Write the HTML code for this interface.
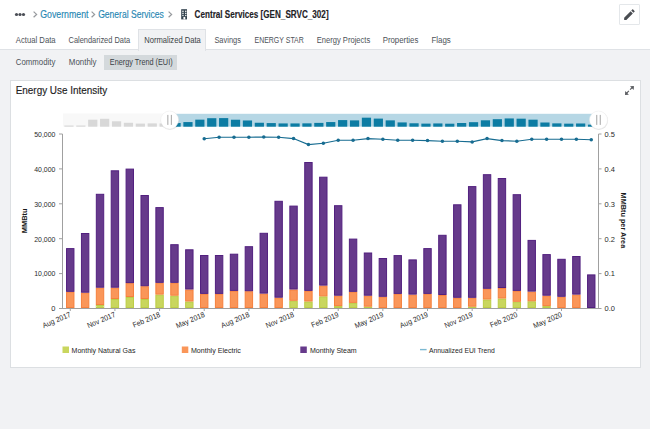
<!DOCTYPE html>
<html><head><meta charset="utf-8">
<style>
*{margin:0;padding:0;box-sizing:border-box}
html,body{width:650px;height:429px;overflow:hidden;background:#f1f2f4;font-family:"Liberation Sans",sans-serif}
#hdr{position:absolute;left:0;top:0;width:650px;height:49.5px;background:#fff;border-bottom:1px solid #dfe2e6}
.abs{position:absolute;white-space:nowrap}
svg text{font-family:"Liberation Sans",sans-serif}
.ax{font-size:7.5px;fill:#2a2a2a}
.axt{font-size:7.5px;font-weight:bold;fill:#1a1a1a}
.lg{font-size:7.8px;fill:#262626}
</style></head><body>
<div id="hdr"></div>
<div class="abs" style="left:138.2px;top:29px;width:67.5px;height:21.5px;background:#f1f2f4;border:1px solid #dfe2e6;border-bottom:none"></div>
<div class="abs" style="left:618.5px;top:4px;width:21.5px;height:20.5px;border:1px solid #e4e7ea;border-radius:1px;background:#fff"></div>
<div class="abs" style="left:104px;top:55.2px;width:73.2px;height:14.7px;background:#d4d9dc"></div>
<div class="abs" style="left:10px;top:80px;width:631px;height:288px;background:#fff;border:1px solid #dcdfe2"></div>
<svg class="abs" style="left:0;top:0" width="650" height="429">
<circle cx="16.5" cy="14.5" r="1.6" fill="#4a4d55"/><circle cx="20" cy="14.5" r="1.6" fill="#4a4d55"/><circle cx="23.5" cy="14.5" r="1.6" fill="#4a4d55"/>
<polyline points="33.6,11.6 36.6,14.4 33.6,17.2" fill="none" stroke="#96999d" stroke-width="1.25"/>
<polyline points="91.6,11.6 94.6,14.4 91.6,17.2" fill="none" stroke="#96999d" stroke-width="1.25"/>
<polyline points="168.6,11.6 171.6,14.4 168.6,17.2" fill="none" stroke="#96999d" stroke-width="1.25"/>
<rect x="181.2" y="9.2" width="5.8" height="10.2" fill="#34434f"/>
<g fill="#fff" opacity="0.85"><rect x="182.2" y="10.6" width="1.5" height="1.4"/><rect x="185.0" y="10.6" width="1.5" height="1.4"/><rect x="182.2" y="12.7" width="1.5" height="1.3"/><rect x="185.0" y="12.7" width="1.5" height="1.3"/><rect x="182.2" y="14.8" width="1.5" height="1.3"/><rect x="185.0" y="14.8" width="1.5" height="1.3"/></g><rect x="183.4" y="16.9" width="1.9" height="2.5" fill="#fff"/>
<path transform="translate(622.4,7.6) scale(0.585)" d="M3 17.25V21h3.75L17.81 9.94l-3.75-3.75L3 17.25zM20.71 7.04c.39-.39.39-1.02 0-1.41l-2.34-2.34c-.39-.39-1.02-.39-1.41 0l-1.83 1.83 3.75 3.75 1.83-1.83z" fill="#4a4d52"/>
<text x="40.2" y="17.6" font-size="10.4" fill="#2787b3" stroke="#2787b3" stroke-width="0.15" text-anchor="start" textLength="48.3" lengthAdjust="spacingAndGlyphs">Government</text>
<text x="98.2" y="17.6" font-size="10.4" fill="#2787b3" stroke="#2787b3" stroke-width="0.15" text-anchor="start" textLength="65.6" lengthAdjust="spacingAndGlyphs">General Services</text>
<text x="194.6" y="17.6" font-size="10.1" fill="#1e2226" stroke="#1e2226" stroke-width="0.15" text-anchor="start" font-weight="bold" textLength="134.0" lengthAdjust="spacingAndGlyphs">Central Services [GEN_SRVC_302]</text>
<text x="15.8" y="42.8" font-size="8.4" fill="#4d5259" stroke="#4d5259" stroke-width="0" text-anchor="start" textLength="39.8" lengthAdjust="spacingAndGlyphs">Actual Data</text>
<text x="68.5" y="42.8" font-size="8.4" fill="#4d5259" stroke="#4d5259" stroke-width="0" text-anchor="start" textLength="61.699999999999996" lengthAdjust="spacingAndGlyphs">Calendarized Data</text>
<text x="144.20000000000002" y="42.8" font-size="8.4" fill="#3a3f45" stroke="#3a3f45" stroke-width="0" text-anchor="start" textLength="56.599999999999994" lengthAdjust="spacingAndGlyphs">Normalized Data</text>
<text x="214.4" y="42.8" font-size="8.4" fill="#4d5259" stroke="#4d5259" stroke-width="0" text-anchor="start" textLength="26.5" lengthAdjust="spacingAndGlyphs">Savings</text>
<text x="254.5" y="42.8" font-size="8.4" fill="#4d5259" stroke="#4d5259" stroke-width="0" text-anchor="start" textLength="49.3" lengthAdjust="spacingAndGlyphs">ENERGY STAR</text>
<text x="316.8" y="42.8" font-size="8.4" fill="#4d5259" stroke="#4d5259" stroke-width="0" text-anchor="start" textLength="53.4" lengthAdjust="spacingAndGlyphs">Energy Projects</text>
<text x="382.7" y="42.8" font-size="8.4" fill="#4d5259" stroke="#4d5259" stroke-width="0" text-anchor="start" textLength="35.599999999999994" lengthAdjust="spacingAndGlyphs">Properties</text>
<text x="431.40000000000003" y="42.8" font-size="8.4" fill="#4d5259" stroke="#4d5259" stroke-width="0" text-anchor="start" textLength="19.400000000000002" lengthAdjust="spacingAndGlyphs">Flags</text>
<text x="15.8" y="65.2" font-size="8.4" fill="#4d5259" stroke="#4d5259" stroke-width="0" text-anchor="start" textLength="39.5" lengthAdjust="spacingAndGlyphs">Commodity</text>
<text x="68.8" y="65.2" font-size="8.4" fill="#4d5259" stroke="#4d5259" stroke-width="0" text-anchor="start" textLength="27.7" lengthAdjust="spacingAndGlyphs">Monthly</text>
<text x="109.8" y="65.2" font-size="8.4" fill="#3a3f45" stroke="#3a3f45" stroke-width="0" text-anchor="start" textLength="62.8" lengthAdjust="spacingAndGlyphs">Energy Trend (EUI)</text>
<text x="15.7" y="93.8" font-size="10.7" fill="#222" stroke="#222" stroke-width="0.15" text-anchor="start" textLength="91.5" lengthAdjust="spacingAndGlyphs">Energy Use Intensity</text>
<rect x="63.0" y="113.5" width="107.0" height="13" fill="#f8f8f8"/>
<rect x="170" y="113.8" width="428.5" height="12.8" fill="#b6d7e5"/>
<rect x="64.35" y="125.50" width="9.2" height="1.20" fill="#d8d8d8"/>
<rect x="76.25" y="125.50" width="9.2" height="1.20" fill="#d8d8d8"/>
<rect x="88.15" y="119.70" width="9.2" height="7.00" fill="#d8d8d8"/>
<rect x="100.05" y="118.80" width="9.2" height="7.90" fill="#d8d8d8"/>
<rect x="111.95" y="121.30" width="9.2" height="5.40" fill="#d8d8d8"/>
<rect x="123.85" y="122.80" width="9.2" height="3.90" fill="#d8d8d8"/>
<rect x="135.75" y="123.60" width="9.2" height="3.10" fill="#d8d8d8"/>
<rect x="147.65" y="123.40" width="9.2" height="3.30" fill="#d8d8d8"/>
<rect x="159.55" y="123.40" width="9.2" height="3.30" fill="#d8d8d8"/>
<rect x="171.45" y="123.00" width="9.2" height="3.70" fill="#0c7ca3"/>
<rect x="183.35" y="122.07" width="9.2" height="4.63" fill="#0c7ca3"/>
<rect x="195.25" y="119.65" width="9.2" height="7.05" fill="#0c7ca3"/>
<rect x="207.15" y="118.20" width="9.2" height="8.50" fill="#0c7ca3"/>
<rect x="219.05" y="118.10" width="9.2" height="8.60" fill="#0c7ca3"/>
<rect x="230.95" y="119.73" width="9.2" height="6.97" fill="#0c7ca3"/>
<rect x="242.85" y="120.47" width="9.2" height="6.23" fill="#0c7ca3"/>
<rect x="254.75" y="122.76" width="9.2" height="3.94" fill="#0c7ca3"/>
<rect x="266.65" y="123.08" width="9.2" height="3.62" fill="#0c7ca3"/>
<rect x="278.55" y="123.43" width="9.2" height="3.27" fill="#0c7ca3"/>
<rect x="290.45" y="123.43" width="9.2" height="3.27" fill="#0c7ca3"/>
<rect x="302.35" y="123.35" width="9.2" height="3.35" fill="#0c7ca3"/>
<rect x="314.25" y="122.89" width="9.2" height="3.81" fill="#0c7ca3"/>
<rect x="326.15" y="122.06" width="9.2" height="4.64" fill="#0c7ca3"/>
<rect x="338.05" y="120.09" width="9.2" height="6.61" fill="#0c7ca3"/>
<rect x="349.95" y="120.38" width="9.2" height="6.32" fill="#0c7ca3"/>
<rect x="361.85" y="117.69" width="9.2" height="9.01" fill="#0c7ca3"/>
<rect x="373.75" y="118.60" width="9.2" height="8.10" fill="#0c7ca3"/>
<rect x="385.65" y="120.36" width="9.2" height="6.34" fill="#0c7ca3"/>
<rect x="397.55" y="122.42" width="9.2" height="4.28" fill="#0c7ca3"/>
<rect x="409.45" y="123.28" width="9.2" height="3.42" fill="#0c7ca3"/>
<rect x="421.35" y="123.62" width="9.2" height="3.08" fill="#0c7ca3"/>
<rect x="433.25" y="123.44" width="9.2" height="3.26" fill="#0c7ca3"/>
<rect x="445.15" y="123.70" width="9.2" height="3.00" fill="#0c7ca3"/>
<rect x="457.05" y="123.00" width="9.2" height="3.70" fill="#0c7ca3"/>
<rect x="468.95" y="122.18" width="9.2" height="4.52" fill="#0c7ca3"/>
<rect x="480.85" y="120.30" width="9.2" height="6.40" fill="#0c7ca3"/>
<rect x="492.75" y="119.18" width="9.2" height="7.52" fill="#0c7ca3"/>
<rect x="504.65" y="118.44" width="9.2" height="8.26" fill="#0c7ca3"/>
<rect x="516.55" y="118.68" width="9.2" height="8.02" fill="#0c7ca3"/>
<rect x="528.45" y="119.68" width="9.2" height="7.02" fill="#0c7ca3"/>
<rect x="540.35" y="122.50" width="9.2" height="4.20" fill="#0c7ca3"/>
<rect x="552.25" y="123.37" width="9.2" height="3.33" fill="#0c7ca3"/>
<rect x="564.15" y="123.66" width="9.2" height="3.04" fill="#0c7ca3"/>
<rect x="576.05" y="123.49" width="9.2" height="3.21" fill="#0c7ca3"/>
<rect x="587.95" y="124.63" width="9.2" height="2.07" fill="#0c7ca3"/>
<circle cx="169.9" cy="120.6" r="9.3" fill="#000" opacity="0.10"/>
<circle cx="169.6" cy="120" r="9" fill="#fff" stroke="#ececec" stroke-width="0.5"/>
<line x1="167.85" y1="114.9" x2="167.85" y2="124.9" stroke="#a5a5a5" stroke-width="1"/>
<line x1="171.35" y1="114.9" x2="171.35" y2="124.9" stroke="#a5a5a5" stroke-width="1"/>
<circle cx="598.8" cy="120.6" r="9.3" fill="#000" opacity="0.10"/>
<circle cx="598.5" cy="120" r="9" fill="#fff" stroke="#ececec" stroke-width="0.5"/>
<line x1="596.75" y1="114.9" x2="596.75" y2="124.9" stroke="#a5a5a5" stroke-width="1"/>
<line x1="600.25" y1="114.9" x2="600.25" y2="124.9" stroke="#a5a5a5" stroke-width="1"/>
<line x1="62.5" y1="134" x2="62.5" y2="308.0" stroke="#a0a0a0" stroke-width="1"/>
<line x1="598.5" y1="134" x2="598.5" y2="308.0" stroke="#a0a0a0" stroke-width="1"/>
<line x1="59" y1="308.5" x2="599.0" y2="308.5" stroke="#a0a0a0" stroke-width="1"/>
<line x1="59" y1="308.5" x2="62.5" y2="308.5" stroke="#a0a0a0" stroke-width="1"/>
<text x="55.4" y="311.3" text-anchor="end" class="ax">0</text>
<line x1="598.5" y1="308.5" x2="601.5" y2="308.5" stroke="#a0a0a0" stroke-width="1"/>
<text x="604.6" y="311.3" class="ax" textLength="10.4" lengthAdjust="spacingAndGlyphs">0.0</text>
<line x1="59" y1="273.6" x2="62.5" y2="273.6" stroke="#a0a0a0" stroke-width="1"/>
<text x="55.4" y="276.4" text-anchor="end" class="ax" textLength="21.2" lengthAdjust="spacingAndGlyphs">10,000</text>
<line x1="598.5" y1="273.6" x2="601.5" y2="273.6" stroke="#a0a0a0" stroke-width="1"/>
<text x="604.6" y="276.4" class="ax" textLength="10.4" lengthAdjust="spacingAndGlyphs">0.1</text>
<line x1="59" y1="238.7" x2="62.5" y2="238.7" stroke="#a0a0a0" stroke-width="1"/>
<text x="55.4" y="241.5" text-anchor="end" class="ax" textLength="21.2" lengthAdjust="spacingAndGlyphs">20,000</text>
<line x1="598.5" y1="238.7" x2="601.5" y2="238.7" stroke="#a0a0a0" stroke-width="1"/>
<text x="604.6" y="241.5" class="ax" textLength="10.4" lengthAdjust="spacingAndGlyphs">0.2</text>
<line x1="59" y1="203.8" x2="62.5" y2="203.8" stroke="#a0a0a0" stroke-width="1"/>
<text x="55.4" y="206.6" text-anchor="end" class="ax" textLength="21.2" lengthAdjust="spacingAndGlyphs">30,000</text>
<line x1="598.5" y1="203.8" x2="601.5" y2="203.8" stroke="#a0a0a0" stroke-width="1"/>
<text x="604.6" y="206.6" class="ax" textLength="10.4" lengthAdjust="spacingAndGlyphs">0.3</text>
<line x1="59" y1="168.9" x2="62.5" y2="168.9" stroke="#a0a0a0" stroke-width="1"/>
<text x="55.4" y="171.7" text-anchor="end" class="ax" textLength="21.2" lengthAdjust="spacingAndGlyphs">40,000</text>
<line x1="598.5" y1="168.9" x2="601.5" y2="168.9" stroke="#a0a0a0" stroke-width="1"/>
<text x="604.6" y="171.7" class="ax" textLength="10.4" lengthAdjust="spacingAndGlyphs">0.4</text>
<line x1="59" y1="134.0" x2="62.5" y2="134.0" stroke="#a0a0a0" stroke-width="1"/>
<text x="55.4" y="136.8" text-anchor="end" class="ax" textLength="21.2" lengthAdjust="spacingAndGlyphs">50,000</text>
<line x1="598.5" y1="134.0" x2="601.5" y2="134.0" stroke="#a0a0a0" stroke-width="1"/>
<text x="604.6" y="136.8" class="ax" textLength="10.4" lengthAdjust="spacingAndGlyphs">0.5</text>
<text class="axt" transform="translate(27.4,220.8) rotate(-90)" text-anchor="middle" textLength="25" lengthAdjust="spacingAndGlyphs">MMBtu</text>
<text class="axt" transform="translate(621.1,220.4) rotate(90)" text-anchor="middle" textLength="55.6" lengthAdjust="spacingAndGlyphs">MMBtu per Area</text>
<line x1="70.25" y1="308.0" x2="70.25" y2="311.0" stroke="#a0a0a0" stroke-width="1"/>
<text class="ax" text-anchor="end" textLength="30" lengthAdjust="spacingAndGlyphs" transform="translate(71.35,316.5) rotate(-23)">Aug 2017</text>
<line x1="114.91" y1="308.0" x2="114.91" y2="311.0" stroke="#a0a0a0" stroke-width="1"/>
<text class="ax" text-anchor="end" textLength="30" lengthAdjust="spacingAndGlyphs" transform="translate(116.01,316.5) rotate(-23)">Nov 2017</text>
<line x1="159.57" y1="308.0" x2="159.57" y2="311.0" stroke="#a0a0a0" stroke-width="1"/>
<text class="ax" text-anchor="end" textLength="29" lengthAdjust="spacingAndGlyphs" transform="translate(160.67,316.5) rotate(-23)">Feb 2018</text>
<line x1="204.22" y1="308.0" x2="204.22" y2="311.0" stroke="#a0a0a0" stroke-width="1"/>
<text class="ax" text-anchor="end" textLength="30.5" lengthAdjust="spacingAndGlyphs" transform="translate(205.32,316.5) rotate(-23)">May 2018</text>
<line x1="248.88" y1="308.0" x2="248.88" y2="311.0" stroke="#a0a0a0" stroke-width="1"/>
<text class="ax" text-anchor="end" textLength="30" lengthAdjust="spacingAndGlyphs" transform="translate(249.98,316.5) rotate(-23)">Aug 2018</text>
<line x1="293.54" y1="308.0" x2="293.54" y2="311.0" stroke="#a0a0a0" stroke-width="1"/>
<text class="ax" text-anchor="end" textLength="30" lengthAdjust="spacingAndGlyphs" transform="translate(294.64,316.5) rotate(-23)">Nov 2018</text>
<line x1="338.20" y1="308.0" x2="338.20" y2="311.0" stroke="#a0a0a0" stroke-width="1"/>
<text class="ax" text-anchor="end" textLength="29" lengthAdjust="spacingAndGlyphs" transform="translate(339.30,316.5) rotate(-23)">Feb 2019</text>
<line x1="382.86" y1="308.0" x2="382.86" y2="311.0" stroke="#a0a0a0" stroke-width="1"/>
<text class="ax" text-anchor="end" textLength="30.5" lengthAdjust="spacingAndGlyphs" transform="translate(383.96,316.5) rotate(-23)">May 2019</text>
<line x1="427.51" y1="308.0" x2="427.51" y2="311.0" stroke="#a0a0a0" stroke-width="1"/>
<text class="ax" text-anchor="end" textLength="30" lengthAdjust="spacingAndGlyphs" transform="translate(428.61,316.5) rotate(-23)">Aug 2019</text>
<line x1="472.17" y1="308.0" x2="472.17" y2="311.0" stroke="#a0a0a0" stroke-width="1"/>
<text class="ax" text-anchor="end" textLength="30" lengthAdjust="spacingAndGlyphs" transform="translate(473.27,316.5) rotate(-23)">Nov 2019</text>
<line x1="516.83" y1="308.0" x2="516.83" y2="311.0" stroke="#a0a0a0" stroke-width="1"/>
<text class="ax" text-anchor="end" textLength="29" lengthAdjust="spacingAndGlyphs" transform="translate(517.93,316.5) rotate(-23)">Feb 2020</text>
<line x1="561.49" y1="308.0" x2="561.49" y2="311.0" stroke="#a0a0a0" stroke-width="1"/>
<text class="ax" text-anchor="end" textLength="30.5" lengthAdjust="spacingAndGlyphs" transform="translate(562.59,316.5) rotate(-23)">May 2020</text>
<rect x="66.55" y="292.35" width="7.4" height="15.15" fill="#fa9659" stroke="#f5803d" stroke-width="1"/>
<rect x="66.55" y="248.60" width="7.4" height="42.75" fill="#663a8b" stroke="#52207f" stroke-width="1"/>
<rect x="81.44" y="293.20" width="7.4" height="14.30" fill="#fa9659" stroke="#f5803d" stroke-width="1"/>
<rect x="81.44" y="233.50" width="7.4" height="58.70" fill="#663a8b" stroke="#52207f" stroke-width="1"/>
<rect x="96.32" y="305.50" width="7.4" height="2.00" fill="#c9d65e" stroke="#bccc46" stroke-width="1"/>
<rect x="96.32" y="288.20" width="7.4" height="16.30" fill="#fa9659" stroke="#f5803d" stroke-width="1"/>
<rect x="96.32" y="194.30" width="7.4" height="92.90" fill="#663a8b" stroke="#52207f" stroke-width="1"/>
<rect x="111.21" y="299.50" width="7.4" height="8.00" fill="#c9d65e" stroke="#bccc46" stroke-width="1"/>
<rect x="111.21" y="288.20" width="7.4" height="10.30" fill="#fa9659" stroke="#f5803d" stroke-width="1"/>
<rect x="111.21" y="170.80" width="7.4" height="116.40" fill="#663a8b" stroke="#52207f" stroke-width="1"/>
<rect x="126.09" y="297.50" width="7.4" height="10.00" fill="#c9d65e" stroke="#bccc46" stroke-width="1"/>
<rect x="126.09" y="283.60" width="7.4" height="12.90" fill="#fa9659" stroke="#f5803d" stroke-width="1"/>
<rect x="126.09" y="169.10" width="7.4" height="113.50" fill="#663a8b" stroke="#52207f" stroke-width="1"/>
<rect x="140.98" y="299.50" width="7.4" height="8.00" fill="#c9d65e" stroke="#bccc46" stroke-width="1"/>
<rect x="140.98" y="286.70" width="7.4" height="11.80" fill="#fa9659" stroke="#f5803d" stroke-width="1"/>
<rect x="140.98" y="195.50" width="7.4" height="90.20" fill="#663a8b" stroke="#52207f" stroke-width="1"/>
<rect x="155.87" y="295.10" width="7.4" height="12.40" fill="#c9d65e" stroke="#bccc46" stroke-width="1"/>
<rect x="155.87" y="283.35" width="7.4" height="10.75" fill="#fa9659" stroke="#f5803d" stroke-width="1"/>
<rect x="155.87" y="207.60" width="7.4" height="74.75" fill="#663a8b" stroke="#52207f" stroke-width="1"/>
<rect x="170.75" y="296.20" width="7.4" height="11.30" fill="#c9d65e" stroke="#bccc46" stroke-width="1"/>
<rect x="170.75" y="283.35" width="7.4" height="11.85" fill="#fa9659" stroke="#f5803d" stroke-width="1"/>
<rect x="170.75" y="244.70" width="7.4" height="37.65" fill="#663a8b" stroke="#52207f" stroke-width="1"/>
<rect x="185.64" y="302.00" width="7.4" height="5.50" fill="#c9d65e" stroke="#bccc46" stroke-width="1"/>
<rect x="185.64" y="290.00" width="7.4" height="11.00" fill="#fa9659" stroke="#f5803d" stroke-width="1"/>
<rect x="185.64" y="249.80" width="7.4" height="39.20" fill="#663a8b" stroke="#52207f" stroke-width="1"/>
<rect x="200.52" y="294.40" width="7.4" height="13.10" fill="#fa9659" stroke="#f5803d" stroke-width="1"/>
<rect x="200.52" y="255.50" width="7.4" height="37.90" fill="#663a8b" stroke="#52207f" stroke-width="1"/>
<rect x="215.41" y="294.40" width="7.4" height="13.10" fill="#fa9659" stroke="#f5803d" stroke-width="1"/>
<rect x="215.41" y="255.50" width="7.4" height="37.90" fill="#663a8b" stroke="#52207f" stroke-width="1"/>
<rect x="230.30" y="291.40" width="7.4" height="16.10" fill="#fa9659" stroke="#f5803d" stroke-width="1"/>
<rect x="230.30" y="254.20" width="7.4" height="36.20" fill="#663a8b" stroke="#52207f" stroke-width="1"/>
<rect x="245.18" y="291.70" width="7.4" height="15.80" fill="#fa9659" stroke="#f5803d" stroke-width="1"/>
<rect x="245.18" y="246.70" width="7.4" height="44.00" fill="#663a8b" stroke="#52207f" stroke-width="1"/>
<rect x="260.07" y="294.10" width="7.4" height="13.40" fill="#fa9659" stroke="#f5803d" stroke-width="1"/>
<rect x="260.07" y="233.30" width="7.4" height="59.80" fill="#663a8b" stroke="#52207f" stroke-width="1"/>
<rect x="274.95" y="298.20" width="7.4" height="9.30" fill="#fa9659" stroke="#f5803d" stroke-width="1"/>
<rect x="274.95" y="201.30" width="7.4" height="95.90" fill="#663a8b" stroke="#52207f" stroke-width="1"/>
<rect x="289.84" y="301.30" width="7.4" height="6.20" fill="#c9d65e" stroke="#bccc46" stroke-width="1"/>
<rect x="289.84" y="290.00" width="7.4" height="10.30" fill="#fa9659" stroke="#f5803d" stroke-width="1"/>
<rect x="289.84" y="206.10" width="7.4" height="82.90" fill="#663a8b" stroke="#52207f" stroke-width="1"/>
<rect x="304.73" y="302.00" width="7.4" height="5.50" fill="#c9d65e" stroke="#bccc46" stroke-width="1"/>
<rect x="304.73" y="291.40" width="7.4" height="9.60" fill="#fa9659" stroke="#f5803d" stroke-width="1"/>
<rect x="304.73" y="162.50" width="7.4" height="127.90" fill="#663a8b" stroke="#52207f" stroke-width="1"/>
<rect x="319.61" y="296.90" width="7.4" height="10.60" fill="#c9d65e" stroke="#bccc46" stroke-width="1"/>
<rect x="319.61" y="286.10" width="7.4" height="9.80" fill="#fa9659" stroke="#f5803d" stroke-width="1"/>
<rect x="319.61" y="177.20" width="7.4" height="107.90" fill="#663a8b" stroke="#52207f" stroke-width="1"/>
<rect x="334.50" y="306.60" width="7.4" height="0.90" fill="#c9d65e" stroke="#bccc46" stroke-width="1"/>
<rect x="334.50" y="296.20" width="7.4" height="9.40" fill="#fa9659" stroke="#f5803d" stroke-width="1"/>
<rect x="334.50" y="205.70" width="7.4" height="89.50" fill="#663a8b" stroke="#52207f" stroke-width="1"/>
<rect x="349.38" y="303.40" width="7.4" height="4.10" fill="#c9d65e" stroke="#bccc46" stroke-width="1"/>
<rect x="349.38" y="292.35" width="7.4" height="10.05" fill="#fa9659" stroke="#f5803d" stroke-width="1"/>
<rect x="349.38" y="239.10" width="7.4" height="52.25" fill="#663a8b" stroke="#52207f" stroke-width="1"/>
<rect x="364.27" y="307.20" width="7.4" height="0.30" fill="#c9d65e" stroke="#bccc46" stroke-width="1"/>
<rect x="364.27" y="296.20" width="7.4" height="10.00" fill="#fa9659" stroke="#f5803d" stroke-width="1"/>
<rect x="364.27" y="253.00" width="7.4" height="42.20" fill="#663a8b" stroke="#52207f" stroke-width="1"/>
<rect x="379.16" y="297.30" width="7.4" height="10.20" fill="#fa9659" stroke="#f5803d" stroke-width="1"/>
<rect x="379.16" y="258.50" width="7.4" height="37.80" fill="#663a8b" stroke="#52207f" stroke-width="1"/>
<rect x="394.04" y="294.40" width="7.4" height="13.10" fill="#fa9659" stroke="#f5803d" stroke-width="1"/>
<rect x="394.04" y="255.60" width="7.4" height="37.80" fill="#663a8b" stroke="#52207f" stroke-width="1"/>
<rect x="408.93" y="295.10" width="7.4" height="12.40" fill="#fa9659" stroke="#f5803d" stroke-width="1"/>
<rect x="408.93" y="259.90" width="7.4" height="34.20" fill="#663a8b" stroke="#52207f" stroke-width="1"/>
<rect x="423.81" y="294.40" width="7.4" height="13.10" fill="#fa9659" stroke="#f5803d" stroke-width="1"/>
<rect x="423.81" y="248.60" width="7.4" height="44.80" fill="#663a8b" stroke="#52207f" stroke-width="1"/>
<rect x="438.70" y="295.50" width="7.4" height="12.00" fill="#fa9659" stroke="#f5803d" stroke-width="1"/>
<rect x="438.70" y="235.30" width="7.4" height="59.20" fill="#663a8b" stroke="#52207f" stroke-width="1"/>
<rect x="453.59" y="298.30" width="7.4" height="9.20" fill="#fa9659" stroke="#f5803d" stroke-width="1"/>
<rect x="453.59" y="204.80" width="7.4" height="92.50" fill="#663a8b" stroke="#52207f" stroke-width="1"/>
<rect x="468.47" y="307.20" width="7.4" height="0.30" fill="#c9d65e" stroke="#bccc46" stroke-width="1"/>
<rect x="468.47" y="298.30" width="7.4" height="7.90" fill="#fa9659" stroke="#f5803d" stroke-width="1"/>
<rect x="468.47" y="186.60" width="7.4" height="110.70" fill="#663a8b" stroke="#52207f" stroke-width="1"/>
<rect x="483.36" y="300.00" width="7.4" height="7.50" fill="#c9d65e" stroke="#bccc46" stroke-width="1"/>
<rect x="483.36" y="289.30" width="7.4" height="9.70" fill="#fa9659" stroke="#f5803d" stroke-width="1"/>
<rect x="483.36" y="174.70" width="7.4" height="113.60" fill="#663a8b" stroke="#52207f" stroke-width="1"/>
<rect x="498.24" y="299.00" width="7.4" height="8.50" fill="#c9d65e" stroke="#bccc46" stroke-width="1"/>
<rect x="498.24" y="288.50" width="7.4" height="9.50" fill="#fa9659" stroke="#f5803d" stroke-width="1"/>
<rect x="498.24" y="178.50" width="7.4" height="109.00" fill="#663a8b" stroke="#52207f" stroke-width="1"/>
<rect x="513.13" y="302.30" width="7.4" height="5.20" fill="#c9d65e" stroke="#bccc46" stroke-width="1"/>
<rect x="513.13" y="291.40" width="7.4" height="9.90" fill="#fa9659" stroke="#f5803d" stroke-width="1"/>
<rect x="513.13" y="194.70" width="7.4" height="95.70" fill="#663a8b" stroke="#52207f" stroke-width="1"/>
<rect x="528.02" y="301.80" width="7.4" height="5.70" fill="#c9d65e" stroke="#bccc46" stroke-width="1"/>
<rect x="528.02" y="292.10" width="7.4" height="8.70" fill="#fa9659" stroke="#f5803d" stroke-width="1"/>
<rect x="528.02" y="240.40" width="7.4" height="50.70" fill="#663a8b" stroke="#52207f" stroke-width="1"/>
<rect x="542.90" y="306.60" width="7.4" height="0.90" fill="#c9d65e" stroke="#bccc46" stroke-width="1"/>
<rect x="542.90" y="296.20" width="7.4" height="9.40" fill="#fa9659" stroke="#f5803d" stroke-width="1"/>
<rect x="542.90" y="254.60" width="7.4" height="40.60" fill="#663a8b" stroke="#52207f" stroke-width="1"/>
<rect x="557.79" y="297.30" width="7.4" height="10.20" fill="#fa9659" stroke="#f5803d" stroke-width="1"/>
<rect x="557.79" y="259.30" width="7.4" height="37.00" fill="#663a8b" stroke="#52207f" stroke-width="1"/>
<rect x="572.67" y="295.10" width="7.4" height="12.40" fill="#fa9659" stroke="#f5803d" stroke-width="1"/>
<rect x="572.67" y="256.50" width="7.4" height="37.60" fill="#663a8b" stroke="#52207f" stroke-width="1"/>
<rect x="587.56" y="274.90" width="7.4" height="32.60" fill="#663a8b" stroke="#52207f" stroke-width="1"/>
<polyline fill="none" stroke="#176c91" stroke-width="1.1" points="204.22,138.80 219.11,137.20 234.00,137.20 248.88,137.20 263.77,137.10 278.65,137.20 293.54,138.60 308.43,144.60 323.31,143.20 338.20,140.20 353.08,140.20 367.97,138.60 382.86,139.30 397.74,140.20 412.63,140.20 427.51,140.60 442.40,141.20 457.29,141.20 472.17,141.90 487.06,138.60 501.94,140.60 516.83,141.20 531.72,139.20 546.60,139.20 561.49,139.20 576.37,139.20 591.26,139.80"/>
<circle cx="204.22" cy="138.80" r="1.75" fill="#176c91"/>
<circle cx="219.11" cy="137.20" r="1.75" fill="#176c91"/>
<circle cx="234.00" cy="137.20" r="1.75" fill="#176c91"/>
<circle cx="248.88" cy="137.20" r="1.75" fill="#176c91"/>
<circle cx="263.77" cy="137.10" r="1.75" fill="#176c91"/>
<circle cx="278.65" cy="137.20" r="1.75" fill="#176c91"/>
<circle cx="293.54" cy="138.60" r="1.75" fill="#176c91"/>
<circle cx="308.43" cy="144.60" r="1.75" fill="#176c91"/>
<circle cx="323.31" cy="143.20" r="1.75" fill="#176c91"/>
<circle cx="338.20" cy="140.20" r="1.75" fill="#176c91"/>
<circle cx="353.08" cy="140.20" r="1.75" fill="#176c91"/>
<circle cx="367.97" cy="138.60" r="1.75" fill="#176c91"/>
<circle cx="382.86" cy="139.30" r="1.75" fill="#176c91"/>
<circle cx="397.74" cy="140.20" r="1.75" fill="#176c91"/>
<circle cx="412.63" cy="140.20" r="1.75" fill="#176c91"/>
<circle cx="427.51" cy="140.60" r="1.75" fill="#176c91"/>
<circle cx="442.40" cy="141.20" r="1.75" fill="#176c91"/>
<circle cx="457.29" cy="141.20" r="1.75" fill="#176c91"/>
<circle cx="472.17" cy="141.90" r="1.75" fill="#176c91"/>
<circle cx="487.06" cy="138.60" r="1.75" fill="#176c91"/>
<circle cx="501.94" cy="140.60" r="1.75" fill="#176c91"/>
<circle cx="516.83" cy="141.20" r="1.75" fill="#176c91"/>
<circle cx="531.72" cy="139.20" r="1.75" fill="#176c91"/>
<circle cx="546.60" cy="139.20" r="1.75" fill="#176c91"/>
<circle cx="561.49" cy="139.20" r="1.75" fill="#176c91"/>
<circle cx="576.37" cy="139.20" r="1.75" fill="#176c91"/>
<circle cx="591.26" cy="139.80" r="1.75" fill="#176c91"/>
<rect x="62.5" y="346.5" width="6.5" height="6.5" fill="#c9d65e"/>
<text class="lg" x="71.6" y="352.8" textLength="63.8" lengthAdjust="spacingAndGlyphs">Monthly Natural Gas</text>
<rect x="181.8" y="346.5" width="6.5" height="6.5" fill="#fa9659"/>
<text class="lg" x="190.9" y="352.8" textLength="50" lengthAdjust="spacingAndGlyphs">Monthly Electric</text>
<rect x="300.3" y="346.5" width="6.5" height="6.5" fill="#663a8b"/>
<text class="lg" x="309.9" y="352.8" textLength="46.8" lengthAdjust="spacingAndGlyphs">Monthly Steam</text>
<line x1="420" y1="349.6" x2="426.6" y2="349.6" stroke="#7cb9d2" stroke-width="1.4"/>
<text class="lg" x="429" y="352.8" textLength="65.9" lengthAdjust="spacingAndGlyphs">Annualized EUI Trend</text>
<g fill="#5a5c60" stroke="#5a5c60"><line x1="626.3" y1="93.5" x2="628.9" y2="90.9" stroke-width="1.1"/><line x1="630.1" y1="89.7" x2="632.6" y2="87.2" stroke-width="1.1"/><path d="M625 94.9 L625.2 91 L628.9 94.7 Z" stroke="none"/><path d="M633.9 86.1 L633.7 90 L630 86.3 Z" stroke="none"/></g>
</svg>
</body></html>
